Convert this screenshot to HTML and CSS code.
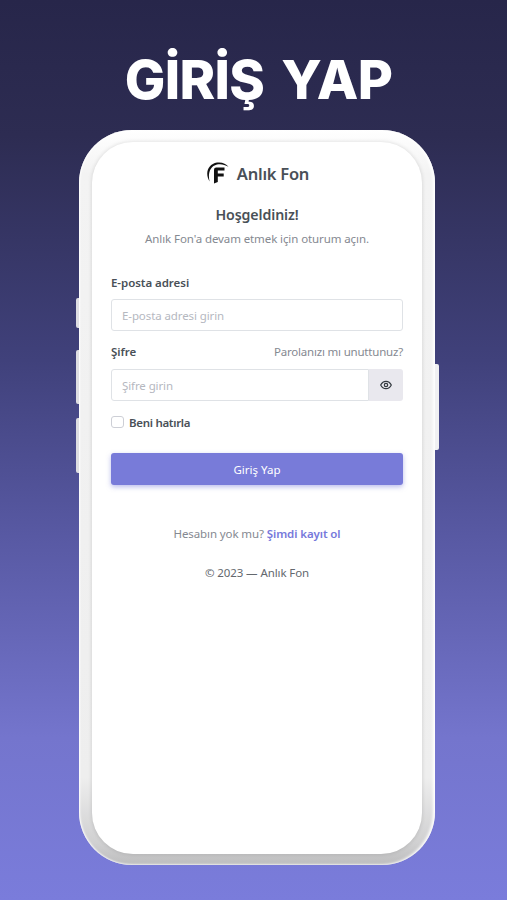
FILE: index.html
```html
<!DOCTYPE html>
<html lang="tr">
<head>
  <meta charset="UTF-8">
  <meta name="viewport" content="width=device-width, initial-scale=1.0">
  <title>Giriş Yap</title>
  <link rel="stylesheet" href="styles.css">
</head>
<body>
<h1 class="title"><span>GİRİŞ</span> <span>YAP</span></h1>

<div class="phone">
  <i class="side mute"></i>
  <i class="side vol-up"></i>
  <i class="side vol-down"></i>
  <i class="side power"></i>
  <div class="screen">
    <div class="brand">
      <svg width="24" height="24" viewBox="0 0 24 24">
        <path d="M3.600 20.500C-1.500 12.500 2 3 11 1.600c5-.7 9 1 11.500 4.200C18.500 3.500 15 2.700 11 3.500 4 5.200 1.600 12.500 3.600 20.500z" fill="#111"/>
        <path d="M8 22.500V8.800Q8 6.500 10.200 6.500H18.500v3h-6.700v3h5.900v2.900h-5.900v5.600z" fill="#111"/>
      </svg>
      <span>Anlık Fon</span>
    </div>

    <h2 class="welcome">Hoşgeldiniz!</h2>
    <p class="lead">Anlık Fon'a devam etmek için oturum açın.</p>

    <form onsubmit="return false">
      <label class="label" for="email">E-posta adresi</label>
      <input class="field" id="email" type="email" placeholder="E-posta adresi girin">

      <div class="label-row">
        <label class="label" for="password">Şifre</label>
        <a class="forgot" href="#">Parolanızı mı unuttunuz?</a>
      </div>
      <div class="group">
        <input class="field" id="password" type="password" placeholder="Şifre girin">
        <button class="eye" type="button" onclick="togglePassword()" aria-label="Göster">
          <svg width="12" height="10" viewBox="0 0 12 10" fill="none" stroke="#343a40" stroke-width="1.200">
            <path d="M.7 5C3.100 .1 8.900 .1 11.300 5 8.900 9.900 3.100 9.900 .7 5z"/>
            <circle cx="6" cy="5" r="1.700"/>
          </svg>
        </button>
      </div>

      <label class="remember"><input type="checkbox"> <span>Beni hatırla</span></label>
      <button class="submit" type="submit">Giriş Yap</button>
    </form>

    <p class="signup">Hesabın yok mu? <a href="#">Şimdi kayıt ol</a></p>
    <p class="copy">© 2023 — Anlık Fon</p>
  </div>
</div>

<script>
  function togglePassword() {
    const input = document.getElementById("password");
    input.type = input.type === "password" ? "text" : "password";
  }
</script>
</body>
</html>
```

FILE: styles.css
```css
* {
  box-sizing: border-box;
}
body {
  margin: 0;
  height: 900px;
  overflow: hidden;
  background: linear-gradient(#27264a 0%, #2d2c52 15%, #40417b 40%, #5657a0 58%, #7475cd 82%, #7a7cdb 100%);
  font-family: "Noto Sans", "Open Sans", sans-serif;
  font-size: 11.5px;
  letter-spacing: -.1px;
  color: #495057;
}
.title {
  display: flex;
  justify-content: center;
  gap: 17px;
  margin: 0;
  padding: 47px 0 0 10px;
  height: 130px;
  font: 800 54px/66px Inter, sans-serif;
  letter-spacing: -.7px;
  color: #fff;
}
.phone {
  position: relative;
  width: 356px;
  height: 735px;
  margin-left: 79px;
  padding: 12px 13px 11px;
  border-radius: 53px;
  background: linear-gradient(#fff 0%, #f3f3f3 6%, #eeeeee 88%, #d0d0d1 97%, #bdbdbe 100%);
  box-shadow: inset 1px 0 2px #fff, inset -2px 0 3px #fff;
}
.side {
  position: absolute;
  left: -3px;
  width: 3px;
  border-radius: 2px 0 0 2px;
  background: #dedee2;
}
.mute {
  top: 168px;
  height: 30px;
}
.vol-up {
  top: 220px;
  height: 54px;
}
.vol-down {
  top: 288px;
  height: 55px;
}
.power {
  left: auto;
  right: -4px;
  top: 234px;
  width: 4px;
  height: 86px;
  border-radius: 0 2px 2px 0;
  background: #f0f0f2;
}
.screen {
  height: 100%;
  padding: 18px 19px;
  border-radius: 41px;
  background: #fff;
  box-shadow: 0 0 4px rgba(0, 0, 0, .14);
}
.brand {
  display: flex;
  justify-content: center;
  align-items: center;
  gap: 7px;
  height: 26px;
  padding-left: 1px;
  font-size: 16.5px;
  font-weight: 600;
  letter-spacing: -.25px;
}
.welcome {
  margin: 18px 0 0;
  font-size: 14.2px;
  line-height: 22px;
  font-weight: 600;
  text-align: center;
}
.lead {
  margin: 4px 0 0;
  line-height: 18px;
  text-align: center;
  color: #858991;
}
form {
  margin-top: 26px;
}
.label {
  display: block;
  line-height: 18px;
  font-weight: 600;
  letter-spacing: -.05px;
}
.field {
  display: block;
  width: 100%;
  height: 32px;
  margin-top: 7px;
  padding: 0 10px;
  border: 1px solid #dfe2e6;
  border-radius: 3px;
  background: #fff;
  font: inherit;
  letter-spacing: inherit;
}
.field::placeholder {
  color: #b5b8bf;
}
.label-row {
  display: flex;
  justify-content: space-between;
  margin-top: 12px;
  line-height: 18px;
}
.forgot {
  color: #858991;
  letter-spacing: -.2px;
  text-decoration: none;
}
.group {
  display: flex;
  margin-top: 8px;
}
.group .field {
  flex: 1;
  margin: 0;
  border-radius: 3px 0 0 3px;
}
.eye {
  display: flex;
  align-items: center;
  justify-content: center;
  width: 34px;
  padding: 0 0 1px;
  border: none;
  border-radius: 0 3px 3px 0;
  background: #e9e8ee;
}
.remember {
  display: flex;
  align-items: center;
  gap: 5px;
  height: 20px;
  margin-top: 11px;
  font-weight: 600;
  letter-spacing: -.3px;
}
.remember input {
  appearance: none;
  width: 13px;
  height: 12px;
  margin: 0;
  border: 1px solid #cdcfd6;
  border-radius: 3px;
}
.submit {
  display: block;
  width: 100%;
  height: 32px;
  margin-top: 21px;
  border: none;
  border-radius: 3px;
  background: #787bd9;
  box-shadow: 0 2px 5px rgba(120, 123, 217, .5);
  color: #fff;
  font: inherit;
}
.signup {
  margin: 40px 0 0;
  line-height: 18px;
  text-align: center;
  color: #858991;
}
.signup a {
  color: #7679db;
  font-weight: 600;
  text-decoration: none;
}
.copy {
  margin: 21px 0 0;
  line-height: 18px;
  text-align: center;
  color: #64686e;
}
```
